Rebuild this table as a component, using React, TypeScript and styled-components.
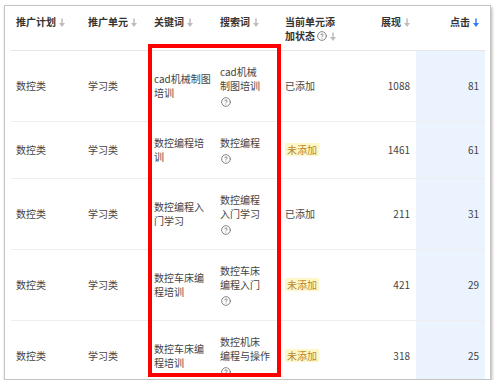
import React from 'react';
import styled, { createGlobalStyle } from 'styled-components';

const GlobalStyle = createGlobalStyle`
  html, body {
    margin: 0;
    padding: 0;
    background: #fff;
  }
  body {
    font-family: "Noto Sans CJK SC", "Noto Sans", sans-serif;
  }
`;

const Frame = styled.div`
  position: relative;
  box-sizing: border-box;
  margin: 5px 0 0 4px;
  width: 487px;
  height: 375px;
  padding: 0 6px;
  border: 1px solid #c4c4c4;
  box-shadow: 1px 2px 3px rgba(0, 0, 0, 0.3);
  background: #fff;
  overflow: hidden;
`;

const Table = styled.table`
  width: 474px;
  border-collapse: collapse;
  table-layout: fixed;
  font-size: 10px;
  line-height: 14px;
`;

const Th = styled.th<{ $right?: boolean }>`
  padding: 9px 6px 7px 5px;
  text-align: ${p => (p.$right ? 'right' : 'left')};
  vertical-align: top;
  font-weight: bold;
  color: #333;
  border-bottom: 1px solid #e6e6e6;
  white-space: nowrap;
`;

const Td = styled.td<{ $right?: boolean; $active?: boolean }>`
  padding: 14px 6px 14px 5px;
  text-align: ${p => (p.$right ? 'right' : 'left')};
  vertical-align: middle;
  color: #444;
  background: ${p => (p.$active ? '#eaf3fe' : 'transparent')};
  border-bottom: 1px solid #eeeeee;
  white-space: nowrap;
`;

const Line = styled.span`
  display: block;
  height: 14px;
`;

const Tag = styled.span`
  display: inline-block;
  padding: 0 2px;
  line-height: 13px;
  color: #b8862a;
  background: #fff7c6;
`;

const Highlight = styled.div`
  position: absolute;
  left: 143px;
  top: 38px;
  box-sizing: border-box;
  width: 133px;
  height: 333px;
  border: 4px solid #ff0000;
  pointer-events: none;
`;

const Arrow = styled.svg`
  display: inline-block;
  margin-left: 3px;
  vertical-align: -1px;
`;

const Help = styled.svg<{ $inline?: boolean }>`
  display: inline-block;
  margin-left: ${p => (p.$inline ? '2px' : '1px')};
  vertical-align: ${p => (p.$inline ? '-1px' : '-3px')};
`;

const SortArrow: React.FC<{ active?: boolean }> = ({ active }) => {
  const c = active ? '#2f7cf6' : '#bdbdbd';
  return (
    <Arrow width="6" height="9" viewBox="0 0 6 9">
      <path d="M3 0.5V6" stroke={c} strokeWidth="1.5" />
      <polygon points="0,5 6,5 3,9" fill={c} />
    </Arrow>
  );
};

const HelpIcon: React.FC<{ inline?: boolean }> = ({ inline }) => (
  <Help $inline={inline} width="10" height="10" viewBox="0 0 24 24" fill="none" stroke="#7a7a7a" strokeWidth="2.2" strokeLinecap="round" strokeLinejoin="round">
    <circle cx="12" cy="12" r="10.4" />
    <path d="M9.09 9a3 3 0 0 1 5.83 1c0 2-3 3-3 3" />
    <path d="M12 17h.01" />
  </Help>
);

type Row = {
  plan: string;
  unit: string;
  keyword: string[];
  term: string[];
  added: boolean;
  views: number;
  clicks: number;
};

const rows: Row[] = [
  { plan: '数控类', unit: '学习类', keyword: ['cad机械制图', '培训'], term: ['cad机械', '制图培训'], added: true, views: 1088, clicks: 81 },
  { plan: '数控类', unit: '学习类', keyword: ['数控编程培', '训'], term: ['数控编程'], added: false, views: 1461, clicks: 61 },
  { plan: '数控类', unit: '学习类', keyword: ['数控编程入', '门学习'], term: ['数控编程', '入门学习'], added: true, views: 211, clicks: 31 },
  { plan: '数控类', unit: '学习类', keyword: ['数控车床编', '程培训'], term: ['数控车床', '编程入门'], added: false, views: 421, clicks: 29 },
  { plan: '数控类', unit: '学习类', keyword: ['数控车床编', '程培训'], term: ['数控机床', '编程与操作'], added: false, views: 318, clicks: 25 },
];

export default function App() {
  return (
    <>
      <GlobalStyle />
      <Frame>
        <Table>
          <colgroup>
            <col style={{ width: 72 }} />
            <col style={{ width: 66 }} />
            <col style={{ width: 66 }} />
            <col style={{ width: 65 }} />
            <col style={{ width: 65 }} />
            <col style={{ width: 71 }} />
            <col style={{ width: 69 }} />
          </colgroup>
          <thead>
            <tr>
              <Th>推广计划<SortArrow /></Th>
              <Th>推广单元<SortArrow /></Th>
              <Th>关键词<SortArrow /></Th>
              <Th>搜索词<SortArrow /></Th>
              <Th>
                <Line>当前单元添</Line>
                <Line>加状态<HelpIcon inline /><SortArrow /></Line>
              </Th>
              <Th $right>展现<SortArrow /></Th>
              <Th $right>点击<SortArrow active /></Th>
            </tr>
          </thead>
          <tbody>
            {rows.map((r, i) => (
              <tr key={i}>
                <Td>{r.plan}</Td>
                <Td>{r.unit}</Td>
                <Td>
                  {r.keyword.map(k => (
                    <Line key={k}>{k}</Line>
                  ))}
                </Td>
                <Td>
                  {r.term.map(t => (
                    <Line key={t}>{t}</Line>
                  ))}
                  <Line>
                    <HelpIcon />
                  </Line>
                </Td>
                <Td>{r.added ? '已添加' : <Tag>未添加</Tag>}</Td>
                <Td $right>{r.views}</Td>
                <Td $right $active>{r.clicks}</Td>
              </tr>
            ))}
          </tbody>
        </Table>
        <Highlight />
      </Frame>
    </>
  );
}
